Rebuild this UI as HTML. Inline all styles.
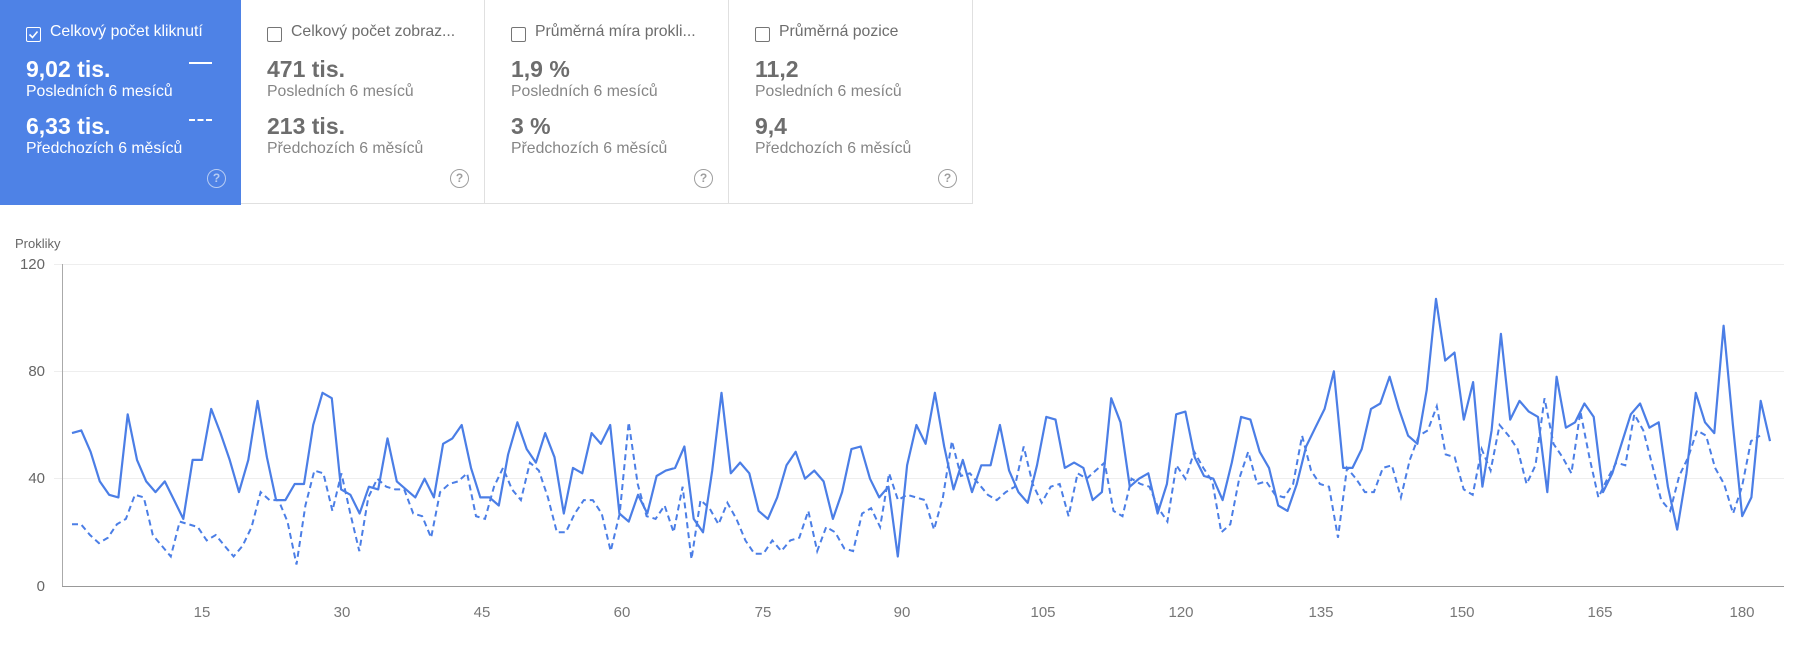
<!DOCTYPE html>
<html><head><meta charset="utf-8"><style>
body{margin:0;width:1812px;height:658px;background:#fff;font-family:"Liberation Sans",Arial,sans-serif;position:relative;overflow:hidden}
.card{position:absolute;top:0;height:204px;width:244px;border-right:1px solid #e0e0e0;border-bottom:1px solid #e0e0e0;box-sizing:border-box;color:#6d6d6d}
.card.on{background:#4e82e6;color:#fff;border:none;width:241px;height:205px}
.cb{position:absolute;left:26px;top:27px;width:13px;height:13px;border:1.5px solid #757575;border-radius:2px}
.on .cb{border-color:#fff}
.t{position:absolute;left:50px;top:23px;font-size:15.8px;white-space:nowrap}
.v{position:absolute;left:26px;font-size:23px;font-weight:bold}
.s{position:absolute;left:26px;font-size:15.8px;white-space:nowrap}
.h{position:absolute;right:15px;top:169px;width:17px;height:17px;border:1.5px solid #9e9e9e;border-radius:50%;font-size:12px;text-align:center;line-height:17px;color:#9e9e9e;font-weight:bold}
.on .h{border-color:#b7ccf3;color:#b7ccf3}
.lab{position:absolute;font-size:15px;color:#666}
</style></head><body>
<div class="card on" style="left:0">
<div class="cb"><svg width="13" height="13" style="position:absolute;left:0;top:0"><path d="M2.5 6.5l3 3 5-6" stroke="#fff" stroke-width="1.6" fill="none"/></svg></div>
<div class="t">Celkový počet kliknutí</div>
<div class="v" style="top:56px">9,02 tis.</div><div class="s" style="top:83px">Posledních 6 mesíců</div>
<div class="v" style="top:113px">6,33 tis.</div><div class="s" style="top:140px">Předchozích 6 měsíců</div>
<div style="position:absolute;left:189px;top:62px;width:23px;height:2px;background:#fff"></div>
<div style="position:absolute;left:189px;top:119px;width:23px;border-top:2px dashed #fff"></div>
<div class="h">?</div></div>
<div class="card" style="left:241px"><div class="cb"></div><div class="t">Celkový počet zobraz...</div>
<div class="v" style="top:56px">471 tis.</div><div class="s" style="top:83px;color:#858585">Posledních 6 mesíců</div>
<div class="v" style="top:113px">213 tis.</div><div class="s" style="top:140px;color:#858585">Předchozích 6 měsíců</div><div class="h">?</div></div>
<div class="card" style="left:485px"><div class="cb"></div><div class="t">Průměrná míra prokli...</div>
<div class="v" style="top:56px">1,9 %</div><div class="s" style="top:83px;color:#858585">Posledních 6 mesíců</div>
<div class="v" style="top:113px">3 %</div><div class="s" style="top:140px;color:#858585">Předchozích 6 měsíců</div><div class="h">?</div></div>
<div class="card" style="left:729px"><div class="cb"></div><div class="t">Průměrná pozice</div>
<div class="v" style="top:56px">11,2</div><div class="s" style="top:83px;color:#858585">Posledních 6 mesíců</div>
<div class="v" style="top:113px">9,4</div><div class="s" style="top:140px;color:#858585">Předchozích 6 měsíců</div><div class="h">?</div></div>

<div class="lab" style="left:15px;top:236px;font-size:13px">Prokliky</div>
<div class="lab" style="left:10px;width:35px;text-align:right;top:256px">120</div>
<div class="lab" style="left:10px;width:35px;text-align:right;top:363px">80</div>
<div class="lab" style="left:10px;width:35px;text-align:right;top:470px">40</div>
<div class="lab" style="left:10px;width:35px;text-align:right;top:578px">0</div>
<svg id="ch" width="1812" height="658" style="position:absolute;left:0;top:0">
<line x1="54" y1="264.5" x2="1784" y2="264.5" stroke="#eee"/>
<line x1="54" y1="371.5" x2="1784" y2="371.5" stroke="#eee"/>
<line x1="54" y1="478.5" x2="1784" y2="478.5" stroke="#eee"/>
<line x1="62.5" y1="264" x2="62.5" y2="586" stroke="#aaa"/>
<line x1="62" y1="586.5" x2="1784" y2="586.5" stroke="#999"/>
<g font-size="15" fill="#777" text-anchor="middle" font-family="Liberation Sans,sans-serif">
<text x="202" y="617">15</text><text x="342" y="617">30</text><text x="482" y="617">45</text><text x="622" y="617">60</text><text x="763" y="617">75</text><text x="902" y="617">90</text><text x="1043" y="617">105</text><text x="1181" y="617">120</text><text x="1321" y="617">135</text><text x="1462" y="617">150</text><text x="1600" y="617">165</text><text x="1742" y="617">180</text>
</g>
<path id="p1" fill="none" stroke="#4b7ee6" stroke-width="2.2" stroke-linejoin="round"/>
<path id="p2" fill="none" stroke="#4b7ee6" stroke-width="2" stroke-dasharray="6,4"/>
</svg>
<script>
var a=[57,58,50,39,34,33,64,47,39,35,39,32,25,47,47,66,57,47,35,47,69,48,32,32,38,38,60,72,70,36,34,27,37,36,55,39,36,33,40,33,53,55,60,44,33,33,30,49,61,51,46,57,48,27,44,42,57,53,60,27,24,34,27,41,43,44,52,25,20,43,72,42,46,42,28,25,33,45,50,40,43,39,25,35,51,52,40,33,37,11,45,60,53,72,52,36,47,35,45,45,60,43,35,31,45,63,62,44,46,44,32,35,70,61,37,40,42,27,38,64,65,48,41,40,32,46,63,62,50,44,30,28,38,52,59,66,80,44,44,51,66,68,78,66,56,53,73,107,84,87,62,76,37,58,94,62,69,65,63,35,78,59,61,68,63,35,42,53,64,68,59,61,37,21,42,72,61,57,97,60,26,33,69,54];
var b=[23,23,19,16,18,23,25,34,33,19,15,11,24,23,22,17,19,15,11,15,22,35,32,32,24,8,30,43,42,28,42,27,13,33,40,37,36,36,27,26,18,35,38,39,42,26,25,37,44,36,32,46,43,33,20,20,27,32,32,27,13,27,61,38,26,25,30,20,37,10,32,29,23,31,25,17,12,12,17,13,17,18,28,13,22,20,14,13,27,29,22,42,32,34,33,32,21,33,54,41,42,38,34,32,35,37,52,38,31,37,38,26,42,40,43,46,28,26,40,38,37,29,24,45,40,50,44,39,20,23,40,50,38,39,34,33,38,56,43,38,37,18,44,40,35,35,44,45,33,47,56,58,67,49,48,36,34,51,43,60,56,51,38,45,70,53,48,42,65,48,33,40,46,45,64,58,45,32,28,41,48,58,56,44,38,27,37,54,56];
function mk(d,x0,x1){var s="";for(var i=0;i<d.length;i++){var x=x0+(x1-x0)*i/(d.length-1),y=586-d[i]*322/120;s+=(i?"L":"M")+x.toFixed(1)+" "+y.toFixed(1);}return s;}
document.getElementById("p1").setAttribute("d",mk(a,72,1770));
document.getElementById("p2").setAttribute("d",mk(b,72,1760));
</script>
</body></html>
